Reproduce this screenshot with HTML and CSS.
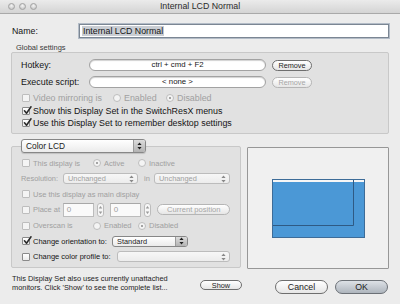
FILE: index.html
```html
<!DOCTYPE html>
<html>
<head>
<meta charset="utf-8">
<link rel="stylesheet" href="styles.css">
</head>
<body>
<div class="window">
  <div class="titlebar">
    <div class="lights"><span class="light"></span><span class="light"></span><span class="light"></span></div>
    <div class="title">Internal LCD Normal</div>
    <div></div>
  </div>
  <div class="content">
    <div class="name-row">
      <span class="name-label">Name:</span>
      <div class="name-field"><span class="sel">Internal LCD Normal</span></div>
    </div>
    <div class="group-title">Global settings</div>
    <div class="group global">
      <div class="grow">
        <span class="glabel">Hotkey:</span>
        <div class="pill-field">ctrl + cmd + F2</div>
        <span class="btn remove">Remove</span>
      </div>
      <div class="grow exec">
        <span class="glabel">Execute script:</span>
        <div class="pill-field">&lt; none &gt;</div>
        <span class="btn remove disabled">Remove</span>
      </div>
      <div class="crow video dis">
        <span class="cb"></span>
        <span class="vlabel">Video mirroring is</span>
        <span class="ritem"><span class="radio"></span>Enabled</span>
        <span class="ritem"><span class="radio on"></span>Disabled</span>
      </div>
      <div class="crow">
        <span class="cb on"><svg class="chk" width="9" height="9" viewBox="0 0 11 11"><path d="M1.8 5.8 L4.3 8.8 L9.8 1" fill="none" stroke="#2a2a2a" stroke-width="1.9" stroke-linecap="round" stroke-linejoin="round"/></svg></span>
        <span>Show this Display Set in the SwitchResX menus</span>
      </div>
      <div class="crow">
        <span class="cb on"><svg class="chk" width="9" height="9" viewBox="0 0 11 11"><path d="M1.8 5.8 L4.3 8.8 L9.8 1" fill="none" stroke="#2a2a2a" stroke-width="1.9" stroke-linecap="round" stroke-linejoin="round"/></svg></span>
        <span>Use this Display Set to remember desktop settings</span>
      </div>
    </div>

    <div class="lower">
      <div class="left">
        <div class="popup big">
          <span class="ptext">Color LCD</span>
          <span class="parrows"><svg width="5" height="8" viewBox="0 0 5 8"><path d="M2.5 0.5 L4.6 3 L0.4 3 Z M2.5 7.5 L4.6 5 L0.4 5 Z" fill="#222"/></svg></span>
        </div>
        <div class="group display">
          <div class="srow dis">
            <span class="cb"></span>
            <span class="slabel w60">This display is</span>
            <span class="ritem w45"><span class="radio on"></span>Active</span>
            <span class="ritem"><span class="radio"></span>Inactive</span>
          </div>
          <div class="srow dis">
            <span class="reslabel">Resolution:</span>
            <div class="popup small dim w75">
              <span class="ptext">Unchanged</span>
              <span class="parrows plain"><svg width="5" height="8" viewBox="0 0 5 8"><path d="M2.5 0.5 L4.6 3 L0.4 3 Z M2.5 7.5 L4.6 5 L0.4 5 Z" fill="#8a8a8a"/></svg></span>
            </div>
            <span class="inlabel">in</span>
            <div class="popup small dim w76">
              <span class="ptext">Unchanged</span>
              <span class="parrows plain"><svg width="5" height="8" viewBox="0 0 5 8"><path d="M2.5 0.5 L4.6 3 L0.4 3 Z M2.5 7.5 L4.6 5 L0.4 5 Z" fill="#8a8a8a"/></svg></span>
            </div>
          </div>
          <div class="srow dis">
            <span class="cb"></span>
            <span>Use this display as main display</span>
          </div>
          <div class="srow dis">
            <span class="cb"></span>
            <span class="slabel w30">Place at</span>
            <div class="tfield w31">0</div>
            <span class="stepper"><svg width="5" height="12" viewBox="0 0 5 12"><path d="M2.5 2 L4.3 4.4 L0.7 4.4 Z M2.5 10 L4.3 7.6 L0.7 7.6 Z" fill="#9a9a9a"/></svg></span>
            <div class="tfield w32 ml6">0</div>
            <span class="stepper"><svg width="5" height="12" viewBox="0 0 5 12"><path d="M2.5 2 L4.3 4.4 L0.7 4.4 Z M2.5 10 L4.3 7.6 L0.7 7.6 Z" fill="#9a9a9a"/></svg></span>
            <span class="btn cur disabled">Current position</span>
          </div>
          <div class="srow dis">
            <span class="cb"></span>
            <span class="slabel w60">Overscan is</span>
            <span class="ritem w45"><span class="radio"></span>Enabled</span>
            <span class="ritem"><span class="radio on"></span>Disabled</span>
          </div>
          <div class="srow">
            <span class="cb on"><svg class="chk" width="9" height="9" viewBox="0 0 11 11"><path d="M1.8 5.8 L4.3 8.8 L9.8 1" fill="none" stroke="#2a2a2a" stroke-width="1.9" stroke-linecap="round" stroke-linejoin="round"/></svg></span>
            <span class="slabel w79">Change orientation to:</span>
            <div class="popup small w76">
              <span class="ptext">Standard</span>
              <span class="parrows"><svg width="5" height="8" viewBox="0 0 5 8"><path d="M2.5 0.5 L4.6 3 L0.4 3 Z M2.5 7.5 L4.6 5 L0.4 5 Z" fill="#222"/></svg></span>
            </div>
          </div>
          <div class="srow">
            <span class="cb"></span>
            <span class="slabel w84">Change color profile to:</span>
            <div class="popup small dim w113">
              <span class="ptext"></span>
              <span class="parrows plain"><svg width="5" height="8" viewBox="0 0 5 8"><path d="M2.5 0.5 L4.6 3 L0.4 3 Z M2.5 7.5 L4.6 5 L0.4 5 Z" fill="#8a8a8a"/></svg></span>
            </div>
          </div>
        </div>
      </div>
      <div class="preview">
        <svg width="93" height="59" viewBox="0 0 93 59">
          <rect x="0.5" y="0.5" width="92" height="58" fill="#4b98d6" stroke="#3d6c98"/>
          <rect x="1" y="1" width="91" height="2" fill="#f6f6f6"/>
          <path d="M81.5 1 V46.5 H1" fill="none" stroke="#2f5a84" stroke-width="1"/>
        </svg>
      </div>
    </div>

    <div class="bottom">
      <div class="note">This Display Set also uses currently unattached<br>monitors. Click 'Show' to see the complete list...</div>
      <span class="btn show">Show</span>
      <span class="btn push cancel">Cancel</span>
      <span class="btn push ok">OK</span>
    </div>
  </div>
</div>
</body>
</html>
```
FILE: styles.css
```css
* { box-sizing: border-box; margin: 0; padding: 0; }
html, body { width: 400px; height: 304px; overflow: hidden; }
body {
  font-family: "Liberation Sans", Arial, sans-serif;
  color: #151515;
  background: #ececec;
}
.window {
  width: 400px;
  height: 304px;
  background: #ececec;
  display: flex;
  flex-direction: column;
}
.titlebar {
  height: 14px;
  flex: none;
  background: linear-gradient(#ebebeb, #d4d4d4);
  border-bottom: 1px solid #a9a9a9;
  display: grid;
  grid-template-columns: 1fr auto 1fr;
  align-items: center;
}
.lights {
  display: flex;
  gap: 4px;
  padding-left: 8px;
}
.light {
  width: 7px;
  height: 7px;
  border-radius: 50%;
  background: radial-gradient(circle at 50% 35%, #f4f4f4, #bdbdbd);
  border: 1px solid #a2a2a2;
}
.title {
  font-size: 8.8px;
  color: #2b2b2b;
  line-height: 13px;
}
.content {
  padding: 0 11px;
  display: flex;
  flex-direction: column;
}
.name-row {
  margin-top: 10px;
  height: 14px;
  display: flex;
  align-items: center;
}
.name-label {
  width: 68px;
  padding-left: 1px;
  font-size: 8.8px;
}
.name-field {
  flex: 1;
  height: 14px;
  background: #fff;
  border: 1px solid #7b8693;
  box-shadow: 0 0 0 1px #b3bcc7;
  font-size: 8.8px;
  line-height: 12px;
  padding-left: 2px;
}
.sel {
  background: #c9cdd3;
  padding: 0 1px;
}
.group-title {
  margin-top: 6px;
  height: 8px;
  line-height: 8px;
  font-size: 7.5px;
  color: #3a3a3a;
  padding-left: 5px;
}
.group {
  background: #e1e1e1;
  border: 1px solid #c8c8c8;
  border-radius: 2px;
}
.global {
  height: 82px;
  padding: 6px 9px 0;
  display: flex;
  flex-direction: column;
  font-size: 8.9px;
}
.grow {
  height: 12px;
  display: flex;
  align-items: center;
}
.grow.exec { margin-top: 5px; }
.glabel { width: 68px; }
.pill-field {
  width: 177px;
  height: 12px;
  border-radius: 6px;
  background: #fff;
  border: 1px solid #a2a2a2;
  box-shadow: inset 0 1px 1px rgba(0,0,0,0.18);
  font-size: 7.8px;
  line-height: 10px;
  text-align: center;
}
.btn {
  display: flex;
  align-items: center;
  justify-content: center;
  background: linear-gradient(#ffffff, #e6e6e6);
  border: 1px solid #6e6e6e;
  border-radius: 7px;
  color: #1c1c1c;
}
.btn.remove {
  margin-left: 6px;
  width: 40px;
  height: 11px;
  font-size: 7.3px;
}
.btn.disabled {
  color: #a6a6a6;
  border-color: #b5b5b5;
}
.crow {
  height: 12.5px;
  display: flex;
  align-items: center;
  padding-left: 1px;
}
.crow.video { margin-top: 4px; }
.dis { color: #a0a0a0; }
.cb {
  position: relative;
  width: 8px;
  height: 8px;
  flex: none;
  margin-right: 3px;
  background: linear-gradient(#ffffff, #ececec);
  border: 1px solid #8a8a8a;
  border-radius: 1px;
}
.dis .cb {
  border-color: #bdbdbd;
  background: #f4f4f4;
}
.chk {
  position: absolute;
  left: 0;
  top: -2px;
}
.vlabel { width: 80px; }
.ritem {
  display: flex;
  align-items: center;
  width: 53px;
}
.radio {
  width: 8px;
  height: 8px;
  flex: none;
  border-radius: 50%;
  border: 1px solid #8a8a8a;
  background: linear-gradient(#ffffff, #ececec);
  margin-right: 3px;
  display: flex;
  align-items: center;
  justify-content: center;
}
.dis .radio { border-color: #bdbdbd; background: #f4f4f4; }
.radio.on::after {
  content: "";
  width: 2px;
  height: 2px;
  border-radius: 50%;
  background: #555;
}
.dis .radio.on::after { background: #8a8a8a; }

.lower {
  margin-top: 5px;
  display: flex;
  align-items: flex-start;
  gap: 6px;
}
.left {
  width: 230px;
  display: flex;
  flex-direction: column;
}
.popup {
  display: flex;
  align-items: center;
  border: 1px solid #878787;
  border-radius: 3px;
  background: linear-gradient(#ffffff, #ebebeb);
  overflow: hidden;
  color: #1c1c1c;
}
.popup.big {
  position: relative;
  z-index: 1;
  margin-left: 10px;
  width: 125px;
  height: 14px;
  font-size: 8.4px;
  box-shadow: 0 1px 1px rgba(0,0,0,0.15);
}
.popup.small {
  height: 11px;
  font-size: 7.4px;
}
.ptext {
  flex: 1;
  padding-left: 4px;
  white-space: nowrap;
}
.parrows {
  align-self: stretch;
  width: 12px;
  display: flex;
  align-items: center;
  justify-content: center;
  border-left: 1px solid #9a9a9a;
  background: linear-gradient(#dcdcdc, #b3b3b3);
}
.parrows.plain {
  border-left: none;
  background: none;
}
.popup.dim {
  border-color: #bcbcbc;
  background: linear-gradient(#f7f7f7, #ececec);
  color: #a0a0a0;
}
.display {
  margin-top: -7px;
  height: 122px;
  padding: 9px 10px 3px;
  display: flex;
  flex-direction: column;
  justify-content: space-between;
  font-size: 7.5px;
}
.srow {
  height: 14px;
  display: flex;
  align-items: center;
}
.slabel { white-space: nowrap; }
.w30 { width: 30px; }
.w60 { width: 60px; }
.w79 { width: 79px; }
.w84 { width: 84px; }
.w45 { width: 45px; }
.w75 { width: 75px; }
.w76 { width: 76px; }
.w113 { width: 113px; }
.w31 { width: 31px; }
.w32 { width: 32px; }
.ml6 { margin-left: 6px; }
.reslabel {
  margin-left: -1px;
  width: 42px;
  font-size: 7.4px;
}
.inlabel {
  margin-left: 6px;
  width: 10px;
}
.tfield {
  height: 14px;
  background: #fafafa;
  border: 1px solid #bcbcbc;
  border-top-color: #a8a8a8;
  font-size: 8px;
  line-height: 12px;
  padding-left: 3px;
  color: #a0a0a0;
}
.stepper {
  margin-left: 3px;
  width: 7px;
  height: 14px;
  border: 1px solid #bcbcbc;
  border-radius: 3px;
  background: #f6f6f6;
  display: flex;
  align-items: center;
  justify-content: center;
}
.btn.cur {
  margin-left: 6px;
  width: 73px;
  height: 11px;
  font-size: 7.6px;
}
.preview {
  width: 142px;
  height: 122px;
  margin-top: 8px;
  background: #f0f0f0;
  border: 1px solid #979797;
  border-radius: 1px;
  display: flex;
  align-items: center;
  justify-content: center;
}
.bottom {
  margin-top: 5px;
  display: flex;
  align-items: flex-start;
}
.note {
  width: 189px;
  padding-left: 1px;
  font-size: 7.4px;
  line-height: 9px;
  color: #1c1c1c;
}
.btn.show {
  margin-top: 6px;
  width: 42px;
  height: 10px;
  font-size: 7.3px;
}
.btn.push {
  margin-top: 6px;
  width: 53px;
  height: 14px;
  font-size: 8.8px;
}
.btn.cancel { margin-left: 33px; }
.btn.ok {
  margin-left: 7px;
  background: linear-gradient(#dde1e6, #aeb5bd);
  border-color: #6b7076;
}
```
